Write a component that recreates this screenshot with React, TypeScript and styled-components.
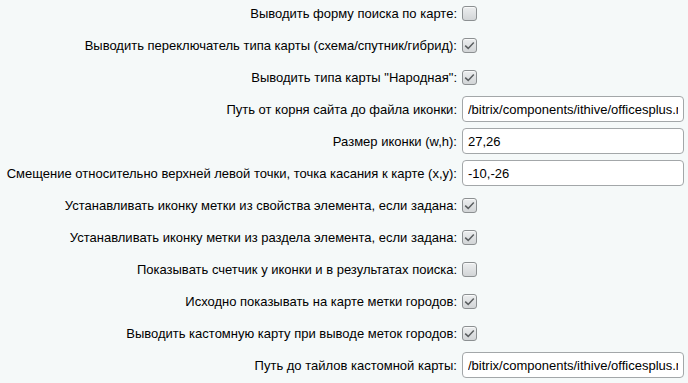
import styled, { createGlobalStyle } from 'styled-components'

const GlobalStyle = createGlobalStyle`
    html, body {
        margin: 0;
        padding: 0;
        background: #f5f9f9;
    }
    body {
        font-family: "Liberation Sans", Arial, sans-serif;
        font-size: 13px;
        color: #000;
    }
`

const Form = styled.div`
    display: grid;
    grid-template-columns: 457px 1fr;
    grid-auto-rows: 32px;
    column-gap: 5px;
    margin-top: -3px;
    width: 688px;
    height: 386px;
    overflow: hidden;
`

const Label = styled.div`
    display: flex;
    align-items: center;
    justify-content: flex-end;
    text-align: right;
    white-space: nowrap;
`

const Control = styled.div`
    display: flex;
    align-items: center;
`

const Box = styled.span`
    display: inline-flex;
    align-items: center;
    justify-content: center;
    width: 15px;
    height: 15px;
    box-sizing: border-box;
    border: 1px solid #8c9092;
    border-radius: 3px;
    background: linear-gradient(#eceeef, #d2d5d7);
    box-shadow: inset 0 1px 0 #f8f9f9;
`

const TextField = styled.input`
    width: 222px;
    height: 26px;
    box-sizing: border-box;
    border: 1px solid #a3a7a9;
    border-radius: 4px;
    background: #fff;
    padding: 0 5px;
    font-family: "Liberation Sans", Arial, sans-serif;
    font-size: 13px;
    color: #000;
    outline: none;
`

type Row =
    | { label: string; kind: 'check'; checked: boolean }
    | { label: string; kind: 'text'; value: string }

const rows: Row[] = [
    { label: 'Выводить форму поиска по карте:', kind: 'check', checked: false },
    { label: 'Выводить переключатель типа карты (схема/спутник/гибрид):', kind: 'check', checked: true },
    { label: 'Выводить типа карты "Народная":', kind: 'check', checked: true },
    { label: 'Путь от корня сайта до файла иконки:', kind: 'text', value: '/bitrix/components/ithive/officesplus.map/images/icon.png' },
    { label: 'Размер иконки (w,h):', kind: 'text', value: '27,26' },
    { label: 'Смещение относительно верхней левой точки, точка касания к карте (x,y):', kind: 'text', value: '-10,-26' },
    { label: 'Устанавливать иконку метки из свойства элемента, если задана:', kind: 'check', checked: true },
    { label: 'Устанавливать иконку метки из раздела элемента, если задана:', kind: 'check', checked: true },
    { label: 'Показывать счетчик у иконки и в результатах поиска:', kind: 'check', checked: false },
    { label: 'Исходно показывать на карте метки городов:', kind: 'check', checked: true },
    { label: 'Выводить кастомную карту при выводе меток городов:', kind: 'check', checked: true },
    { label: 'Путь до тайлов кастомной карты:', kind: 'text', value: '/bitrix/components/ithive/officesplus.map/tiles/' },
]

function CheckBox({ checked }: { checked: boolean }) {
    return (
        <Box>
            {checked && (
                <svg width="11" height="9" viewBox="0 0 11 9">
                    <path d="M1.2 4.6 L4.2 7.4 L9.8 1.4" fill="none" stroke="#5a5e60" strokeWidth="1.5" />
                </svg>
            )}
        </Box>
    )
}

export default function App() {
    return (
        <>
            <GlobalStyle />
            <Form>
                {rows.map((row, i) => [
                    <Label key={'l' + i}>{row.label}</Label>,
                    <Control key={'c' + i}>
                        {row.kind === 'check'
                            ? <CheckBox checked={row.checked} />
                            : <TextField value={row.value} readOnly />}
                    </Control>,
                ])}
            </Form>
        </>
    )
}
